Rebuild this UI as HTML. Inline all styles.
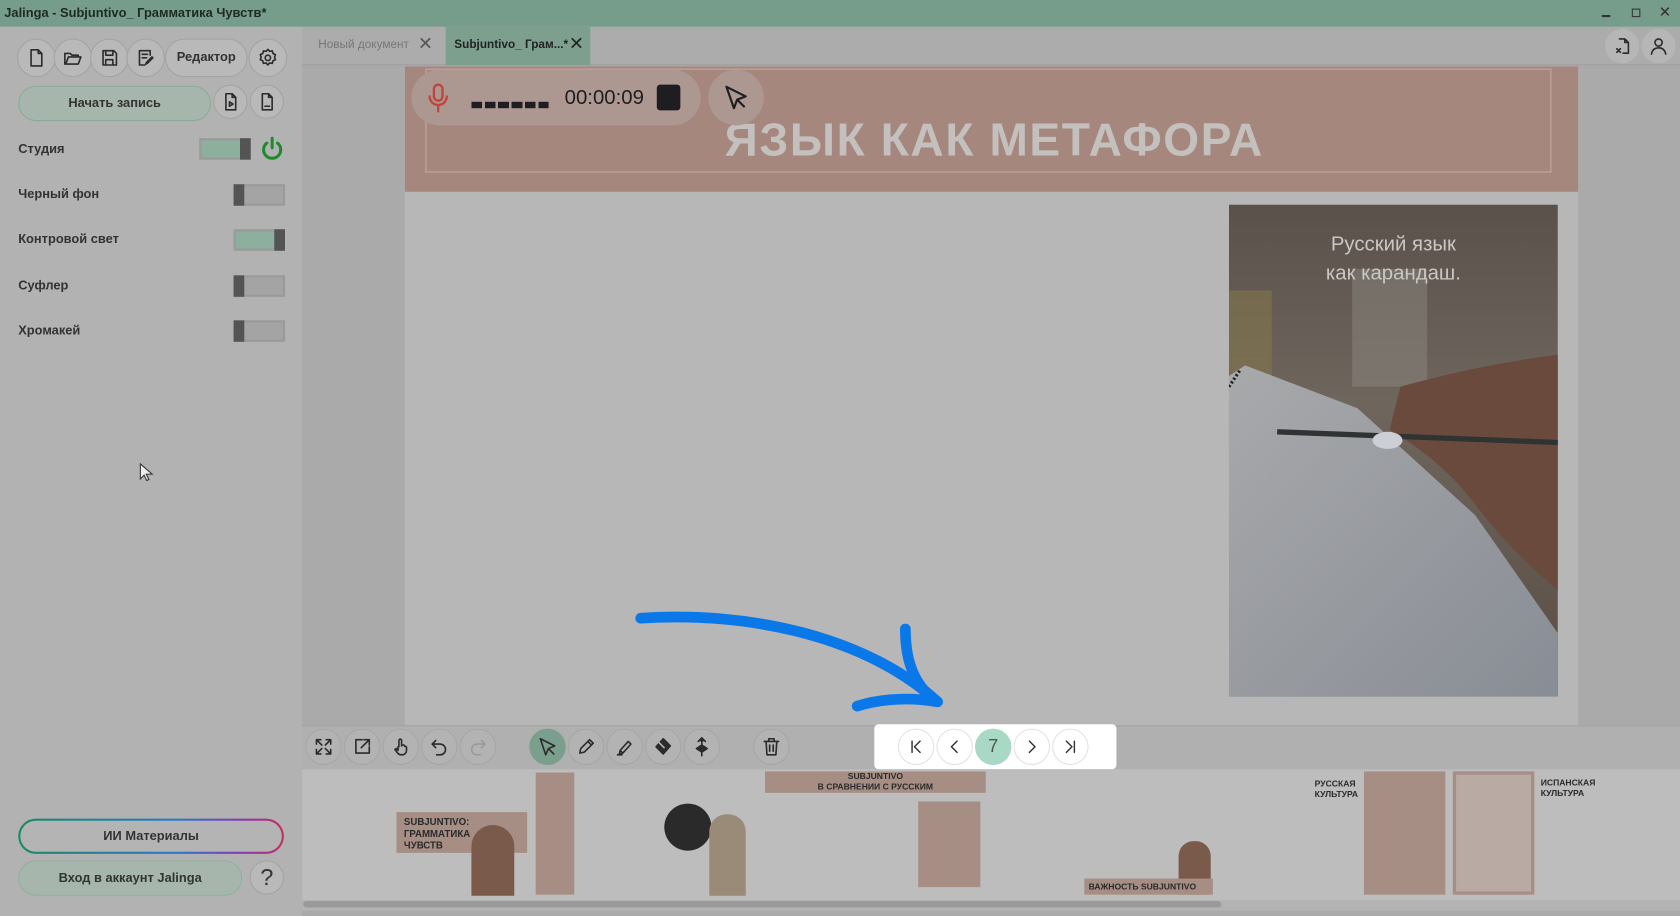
<!DOCTYPE html>
<html><head><meta charset="utf-8"><style>
*{box-sizing:border-box;margin:0;padding:0}
html,body{width:1680px;height:910px;overflow:hidden;background:#aaaaaa}
#w{position:absolute;left:0;top:0;width:1568px;height:850px;transform:scale(1.07143);transform-origin:0 0;font-family:"Liberation Sans","Noto Sans CJK SC",sans-serif;color:#2a2a2a;background:#aaaaaa}
.a{position:absolute}
.cb{position:absolute;width:36px;height:36px;border-radius:50%;background:#b9b9b9;border:1.5px solid #a3a3a3;display:flex;align-items:center;justify-content:center}
.cb svg{width:20px;height:20px;fill:none;stroke:#2b2b2b;stroke-width:1.8;stroke-linecap:round;stroke-linejoin:round}
.lbl{position:absolute;left:17px;font-size:12px;font-weight:bold;color:#333}
.tg{position:absolute;width:48px;height:20px;border:2px solid #9a9a9a;background:#a4a4a4}
.tg i{position:absolute;top:-2px;width:10px;height:20px;background:#545454}
.tb{position:absolute;top:680px;width:34px;height:34px;border-radius:50%;background:#b3b3b3;border:1.5px solid #a6a6a6;display:flex;align-items:center;justify-content:center}
.tb svg{width:20px;height:20px;fill:none;stroke:#2b2b2b;stroke-width:1.8;stroke-linecap:round;stroke-linejoin:round}
.nb{position:absolute;top:680px;width:34px;height:34px;border-radius:50%;background:#fff;border:1.5px solid #e2e2e2;display:flex;align-items:center;justify-content:center}
.nb svg{width:18px;height:18px;fill:none;stroke:#333;stroke-width:1.8;stroke-linecap:round;stroke-linejoin:round}
</style></head><body><div id="w">
<div class="a" style="left:0;top:0;width:1568px;height:25px;background:#769d8b"></div>
<div class="a" style="left:4px;top:5px;font-size:12px;font-weight:bold;color:#1e2a24">Jalinga - Subjuntivo_ Грамматика Чувств*</div>
<div class="a" style="left:1495px;top:14px;width:8px;height:2px;background:#333"></div>
<div class="a" style="left:1523px;top:8px;width:8px;height:8px;border:1.5px solid #333"></div>
<div class="a" style="left:1548px;top:3px;font-size:14px;color:#333">✕</div>
<div class="a" style="left:0;top:25px;width:282px;height:830px;background:#b2b2b2"></div>
<div class="cb" style="left:16px;top:36px"><svg viewBox="0 0 24 24"><path d="M6 3h8l4 4v14H6z M14 3v4h4"/></svg></div>
<div class="cb" style="left:50px;top:36px"><svg viewBox="0 0 24 24"><path d="M3 7v12h15l3-8H7L4 19 M3 7h6l2 2h7v2"/></svg></div>
<div class="cb" style="left:84px;top:36px"><svg viewBox="0 0 24 24"><path d="M5 4h12l3 3v13H5z M8 4v5h8V4 M8 20v-6h8v6"/></svg></div>
<div class="cb" style="left:118px;top:36px"><svg viewBox="0 0 24 24"><path d="M17 9V4H5v16h6 M8 8h6 M8 12h5 M20 12l-6 6-2 1 1-2 6-6z"/></svg></div>
<div class="a" style="left:154px;top:36px;width:77px;height:36px;border-radius:18px;background:#b9b9b9;border:1.5px solid #a3a3a3;font-size:12px;font-weight:bold;line-height:33px;text-align:center;color:#333">Редактор</div>
<div class="cb" style="left:232px;top:36px"><svg viewBox="0 0 24 24"><circle cx="12" cy="12" r="3"/><path d="M12 2.5l2 2.2 3-.5.7 2.9 2.8 1.3-1 2.8 1 2.8-2.8 1.3-.7 2.9-3-.5-2 2.2-2-2.2-3 .5-.7-2.9-2.8-1.3 1-2.8-1-2.8 2.8-1.3.7-2.9 3 .5z"/></svg></div>
<div class="a" style="left:17px;top:80px;width:180px;height:33px;border-radius:17px;background:#a6b6ac;border:1.5px solid #86ac98;font-size:12px;font-weight:bold;line-height:30px;text-align:center;color:#333">Начать запись</div>
<div class="cb" style="left:199px;top:79px;width:32px;height:32px"><svg viewBox="0 0 24 24"><path d="M7 3h7l4 4v14H7z M14 3v4h4 M11 12v5l4-2.5z"/></svg></div>
<div class="cb" style="left:233px;top:79px;width:32px;height:32px"><svg viewBox="0 0 24 24"><path d="M7 3h7l4 4v14H7z M14 3v4h4 M10 17h5"/></svg></div>
<div class="lbl" style="top:132px">Студия</div>
<div class="a" style="left:186px;top:129px;width:48px;height:20px;border:2px solid #9a9a9a;background:#8daf9d"><i style="position:absolute;right:-2px;top:-2px;width:10px;height:20px;background:#545454"></i></div>
<svg class="a" style="left:241px;top:126px" width="26" height="26" viewBox="0 0 26 26"><path d="M8 7.5a8 8 0 1 0 10 0" fill="none" stroke="#1d8a2c" stroke-width="2.8" stroke-linecap="round"/><path d="M13 3v9" stroke="#1d8a2c" stroke-width="2.8" stroke-linecap="round"/></svg>
<div class="lbl" style="top:174px">Черный фон</div>
<div class="tg" style="left:218px;top:172px"><i style="left:-2px"></i></div>
<div class="lbl" style="top:216px">Контровой свет</div>
<div class="tg" style="left:218px;top:214px;background:#8daf9d"><i style="right:-2px"></i></div>
<div class="lbl" style="top:259px">Суфлер</div>
<div class="tg" style="left:218px;top:257px"><i style="left:-2px"></i></div>
<div class="lbl" style="top:301px">Хромакей</div>
<div class="tg" style="left:218px;top:299px"><i style="left:-2px"></i></div>
<svg class="a" style="left:130px;top:432px" width="14" height="18" viewBox="0 0 14 18"><path d="M1 1v14l3.5-3.5 2.5 5 2-1-2.5-5H12z" fill="#eee" stroke="#333" stroke-width="1"/></svg>
<div class="a" style="left:17px;top:764px;width:248px;height:33px;border-radius:17px;padding:2px;background:linear-gradient(90deg,#1b8a66,#2c7ac9 60%,#8a3ab0 85%,#c23060)"><div style="width:100%;height:100%;border-radius:15px;background:#b4b4b4;font-size:12px;font-weight:bold;line-height:29px;text-align:center;color:#333">ИИ Материалы</div></div>
<div class="a" style="left:17px;top:803px;width:209px;height:33px;border-radius:17px;background:#a6b6ac;border:1.5px solid #8fb09f;font-size:12px;font-weight:bold;line-height:30px;text-align:center;color:#333">Вход в аккаунт Jalinga</div>
<div class="a" style="left:233px;top:803px;width:32px;height:32px;border-radius:50%;background:#b9b9b9;border:1.5px solid #a3a3a3;font-size:22px;line-height:29px;text-align:center;color:#333">?</div>
<div class="a" style="left:282px;top:25px;width:1286px;height:36px;background:#acacac;border-bottom:1px solid #9f9f9f"></div>
<div class="a" style="left:297px;top:36px;font-size:11px;color:#777">Новый документ</div>
<div class="a" style="left:390px;top:31px;font-size:17px;color:#555">✕</div>
<div class="a" style="left:416px;top:25px;width:135px;height:36px;background:#7da08e"></div>
<div class="a" style="left:424px;top:36px;font-size:11px;font-weight:bold;color:#222">Subjuntivo_ Грам...*</div>
<div class="a" style="left:531px;top:31px;font-size:17px;color:#222">✕</div>
<div class="cb" style="left:1498px;top:27px;width:32px;height:32px;background:#b6b6b6;border:none"><svg viewBox="0 0 24 24"><path d="M9 4h6l4 4v12h-6 M15 4v4h4 M6 15l4 4 M10 15l-4 4"/></svg></div>
<div class="cb" style="left:1532px;top:27px;width:32px;height:32px;background:#b6b6b6;border:none"><svg viewBox="0 0 24 24"><circle cx="12" cy="8" r="4"/><path d="M4 21c1-5 4-7 8-7s7 2 8 7"/></svg></div>
<div class="a" style="left:282px;top:62px;width:1286px;height:616px;background:#aaaaaa"></div>
<div class="a" style="left:378px;top:62px;width:1095px;height:615px;background:#b7b7b7"></div>
<div class="a" style="left:378px;top:62px;width:1095px;height:117px;background:#a5877e"></div>
<div class="a" style="left:397px;top:64px;width:1051px;height:97px;border:1px solid #c2aaa3"></div>
<div class="a" style="left:378px;top:107px;width:1095px;text-align:center;font-size:43px;font-weight:bold;letter-spacing:1.5px;color:#c4c0bd;padding-left:5px">ЯЗЫК КАК МЕТАФОРА</div>
<div class="a" style="left:384px;top:65px;width:270px;height:52px;border-radius:26px;background:#ad9791"></div>
<svg class="a" style="left:398px;top:77px" width="22" height="30" viewBox="0 0 22 30"><rect x="7" y="2" width="8" height="15" rx="4" fill="none" stroke="#c2453b" stroke-width="2.2"/><path d="M3 13a8 8 0 0 0 16 0 M11 21v6" fill="none" stroke="#c2453b" stroke-width="2.2" stroke-linecap="round"/></svg>
<div class="a" style="left:440px;top:95px;width:72px;height:6px;background:repeating-linear-gradient(90deg,#1e1e22 0 10px,transparent 10px 12.5px)"></div>
<div class="a" style="left:527px;top:81px;font-size:19px;color:#1e1e22">00:00:09</div>
<div class="a" style="left:613px;top:79px;width:22px;height:24px;border-radius:3px;background:#1e1e22"></div>
<div class="a" style="left:661px;top:65px;width:52px;height:52px;border-radius:50%;background:#ad9791"></div>
<svg class="a" style="left:675px;top:78px" width="26" height="26" viewBox="0 0 26 26"><path d="M3 3l7 20 3-8 8-3z M13 15l7 7" fill="none" stroke="#1e1e22" stroke-width="2" stroke-linejoin="round"/></svg>
<svg class="a" style="left:1147px;top:191px" width="307" height="459" viewBox="0 0 307 459">
<defs><linearGradient id="bg" x1="0" y1="0" x2="0" y2="1"><stop offset="0" stop-color="#5a514b"/><stop offset="0.4" stop-color="#6e665d"/><stop offset="1" stop-color="#5a4d44"/></linearGradient>
<linearGradient id="pp" x1="0" y1="0" x2="1" y2="1"><stop offset="0" stop-color="#a8a9ab"/><stop offset="1" stop-color="#888d95"/></linearGradient></defs>
<rect width="307" height="459" fill="url(#bg)"/>
<rect x="0" y="80" width="40" height="100" fill="#8a7a4a" opacity=".5"/>
<rect x="115" y="60" width="70" height="110" fill="#8a8680" opacity=".5"/>
<path d="M0 160 L15 150 L120 190 L230 290 L307 400 L307 459 L0 459z" fill="url(#pp)"/>
<path d="M0 170 L10 155" stroke="#222" stroke-width="3" fill="none" stroke-dasharray="2 2"/>
<path d="M160 170 Q230 150 307 140 L307 360 Q260 320 230 280 Q200 240 150 210z" fill="#6b4a3e"/>
<path d="M45 212 L307 222" stroke="#2f3432" stroke-width="5"/>
<ellipse cx="148" cy="220" rx="14" ry="8" fill="#ccd0d6"/>
</svg>
<div class="a" style="left:1147px;top:215px;width:307px;text-align:center;font-size:19px;line-height:27px;color:#c9c7c6">Русский язык<br>как карандаш.</div>
<svg class="a" style="left:590px;top:565px" width="300" height="105" viewBox="0 0 300 105"><path d="M8 12 C110 5 220 30 285 90" fill="none" stroke="#0a78e8" stroke-width="10" stroke-linecap="round"/><path d="M255 22 C255 50 262 75 285 90 C255 85 230 88 210 94" fill="none" stroke="#0a78e8" stroke-width="10" stroke-linecap="round" stroke-linejoin="round"/></svg>
<div class="a" style="left:282px;top:677px;width:1286px;height:41px;background:#b0b0b0;border-top:1px solid #a2a2a2"></div>
<div class="tb" style="left:285px"><svg viewBox="0 0 24 24"><path d="M4 9V4h5 M4 4l6 6 M20 9V4h-5 M20 4l-6 6 M4 15v5h5 M4 20l6-6 M20 15v5h-5 M20 20l-6-6"/></svg></div>
<div class="tb" style="left:321px"><svg viewBox="0 0 24 24"><path d="M12 4H5v15h15v-7 M14 4h6v6 M20 4l-9 9"/></svg></div>
<div class="tb" style="left:357px"><svg viewBox="0 0 24 24"><path d="M10 12V5a1.5 1.5 0 0 1 3 0v6 M13 10h2a1.5 1.5 0 0 1 1.5 1.5 M16.5 11.5a1.5 1.5 0 0 1 2 1.5v3a5 5 0 0 1-5 5h-1a5 5 0 0 1-4-2l-3-4 1.5-1 2 2V12"/></svg></div>
<div class="tb" style="left:393px"><svg viewBox="0 0 24 24"><path d="M8 5L4 9l4 4 M4 9h9a6 6 0 0 1 0 12H9"/></svg></div>
<div class="tb" style="left:429px"><svg viewBox="0 0 24 24" style="stroke:#9a9a9a"><path d="M16 5l4 4-4 4 M20 9h-9a6 6 0 0 0 0 12h4"/></svg></div>
<div class="tb" style="left:494px;background:#7a9f8c;border-color:#7a9f8c"><svg viewBox="0 0 24 24"><path d="M4 3l6 18 3-7 7-3z M13 14l6 6"/></svg></div>
<div class="tb" style="left:530px"><svg viewBox="0 0 24 24"><path d="M5 19l1-5L16 4l4 4-10 10z M14 6l4 4"/></svg></div>
<div class="tb" style="left:566px"><svg viewBox="0 0 24 24"><path d="M6 20l1-4 9-10 3 3-9 10z M7 16l3 3 M4 21h5"/></svg></div>
<div class="tb" style="left:602px"><svg viewBox="0 0 24 24"><path d="M12 3l8 8-8 9-8-8z" fill="#2b2b2b"/><path d="M7 7l6 6" stroke="#b3b3b3"/></svg></div>
<div class="tb" style="left:638px"><svg viewBox="0 0 24 24"><path d="M12 2v20 M8 6l4-4 4 4 M6 14l6-4 6 4-6 4z" fill="#2b2b2b"/></svg></div>
<div class="tb" style="left:703px"><svg viewBox="0 0 24 24"><path d="M4 6h16 M9 6V3h6v3 M6 6l1 15h10l1-15 M10 10v7 M14 10v7"/></svg></div>
<div class="a" style="left:816px;top:676px;width:226px;height:42px;background:#fff;border-radius:4px"></div>
<div class="nb" style="left:838px"><svg viewBox="0 0 24 24"><path d="M7 5v14 M17 5l-7 7 7 7"/></svg></div>
<div class="nb" style="left:874px"><svg viewBox="0 0 24 24"><path d="M15 5l-7 7 7 7"/></svg></div>
<div class="nb" style="left:910px;background:#a9d9c4;border-color:#a9d9c4;font-size:17px;color:#4a5a52">7</div>
<div class="nb" style="left:946px"><svg viewBox="0 0 24 24"><path d="M9 5l7 7-7 7"/></svg></div>
<div class="nb" style="left:982px"><svg viewBox="0 0 24 24"><path d="M17 5v14 M7 5l7 7-7 7"/></svg></div>
<div class="a" style="left:282px;top:718px;width:1286px;height:122px;background:#bdbdbd"></div>
<div class="a" style="left:370px;top:758px;width:122px;height:38px;background:#a68e84"></div>
<div class="a" style="left:377px;top:762px;font-size:9px;font-weight:bold;line-height:11px;color:#2a2a2a">SUBJUNTIVO:<br>ГРАММАТИКА<br>ЧУВСТВ</div>
<div class="a" style="left:440px;top:770px;width:40px;height:66px;border-radius:20px 20px 0 0;background:#7a5a4a"></div>
<div class="a" style="left:500px;top:721px;width:36px;height:114px;background:#a68e84"></div>
<div class="a" style="left:620px;top:750px;width:44px;height:44px;border-radius:50%;background:#2a2a2a"></div>
<div class="a" style="left:662px;top:760px;width:34px;height:76px;background:#9a8a78;border-radius:16px 16px 0 0"></div>
<div class="a" style="left:714px;top:720px;width:206px;height:20px;background:#a68e84;font-size:8px;font-weight:bold;text-align:center;line-height:10px;color:#2a2a2a">SUBJUNTIVO<br>В СРАВНЕНИИ С РУССКИМ</div>
<div class="a" style="left:857px;top:748px;width:58px;height:80px;background:#a68e84"></div>
<div class="a" style="left:1100px;top:785px;width:30px;height:50px;background:#7a5a4a;border-radius:14px 14px 0 0"></div>
<div class="a" style="left:1012px;top:820px;width:120px;height:15px;background:#a68e84;font-size:8px;font-weight:bold;line-height:15px;padding-left:4px;color:#2a2a2a">ВАЖНОСТЬ SUBJUNTIVO</div>
<div class="a" style="left:1227px;top:727px;font-size:8px;font-weight:bold;line-height:10px;color:#2a2a2a">РУССКАЯ<br>КУЛЬТУРА</div>
<div class="a" style="left:1273px;top:720px;width:76px;height:115px;background:#a68e84"></div>
<div class="a" style="left:1356px;top:720px;width:76px;height:115px;background:#b9aaa4;border:3px solid #a68e84"></div>
<div class="a" style="left:1438px;top:726px;font-size:8px;font-weight:bold;line-height:10px;color:#2a2a2a">ИСПАНСКАЯ<br>КУЛЬТУРА</div>
<div class="a" style="left:282px;top:840px;width:1286px;height:10px;background:#b3b3b3"></div>
<div class="a" style="left:283px;top:841px;width:857px;height:6px;border-radius:3px;background:#999"></div>
</div></body></html>
